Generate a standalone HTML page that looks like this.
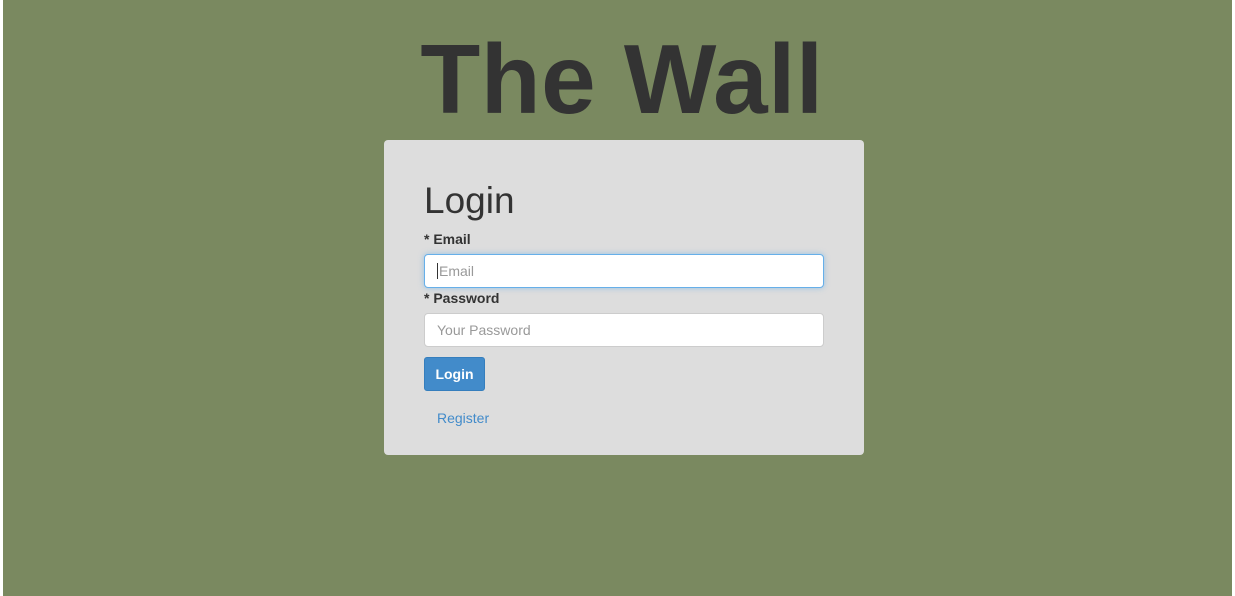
<!DOCTYPE html>
<html><head><style>
html,body{margin:0;padding:0}
body{width:1235px;height:596px;background:#fff;font-family:"Liberation Sans",Arial,sans-serif;position:relative;overflow:hidden}
.bg{position:absolute;left:3px;top:0;width:1229px;height:596px;background:#7a8960}
h1{position:absolute;left:0;width:1244px;top:22px;margin:0;text-align:center;font-size:98px;font-weight:bold;color:#333;line-height:114px;letter-spacing:0.5px}
.card{position:absolute;left:384px;top:140px;width:480px;height:315px;background:#dddddd;border-radius:4px}
.h2{position:absolute;left:40px;top:40px;font-size:37px;color:#333;line-height:42px}
.lab{position:absolute;left:40px;font-size:14px;font-weight:bold;color:#333}
.inp{position:absolute;left:40px;width:400px;height:34px;background:#fff;border:1px solid #ccc;border-radius:4px;box-sizing:border-box;font-size:14px;color:#999;padding:8px 12px;line-height:16px}
.focus{border-color:#66afe9;box-shadow:0 0 6px rgba(102,175,233,.6)}
.btn{position:absolute;left:40px;top:217px;width:61px;height:34px;background:#428bca;border:1px solid #357ebd;border-radius:3px;box-sizing:border-box;color:#fff;font-size:14px;font-weight:bold;text-align:center;line-height:32px}
.reg{position:absolute;left:53px;top:270px;font-size:14px;color:#428bca}
</style></head><body>
<div class="bg"></div>
<h1>The Wall</h1>
<div class="card">
<div class="h2">Login</div>
<div class="lab" style="top:91px">* Email</div>
<div class="inp focus" style="top:114px"><span style="border-left:1px solid #333;padding-left:1px">Email</span></div>
<div class="lab" style="top:150px">* Password</div>
<div class="inp" style="top:173px">Your Password</div>
<div class="btn">Login</div>
<div class="reg">Register</div>
</div>
</body></html>
